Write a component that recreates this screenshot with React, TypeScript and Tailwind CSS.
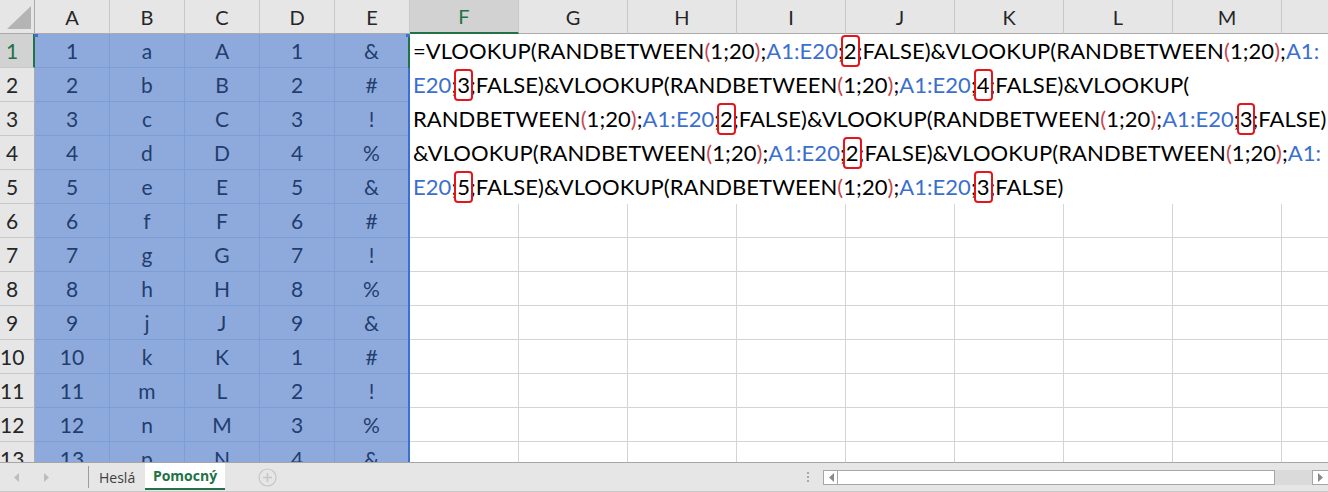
import React from 'react'

const COLS_RIGHT = ['F', 'G', 'H', 'I', 'J', 'K', 'L', 'M']

const DATA: string[][] = [
  ['1', 'a', 'A', '1', '&'],
  ['2', 'b', 'B', '2', '#'],
  ['3', 'c', 'C', '3', '!'],
  ['4', 'd', 'D', '4', '%'],
  ['5', 'e', 'E', '5', '&'],
  ['6', 'f', 'F', '6', '#'],
  ['7', 'g', 'G', '7', '!'],
  ['8', 'h', 'H', '8', '%'],
  ['9', 'j', 'J', '9', '&'],
  ['10', 'k', 'K', '1', '#'],
  ['11', 'm', 'L', '2', '!'],
  ['12', 'n', 'M', '3', '%'],
  ['13', 'p', 'N', '4', '&'],
]

// [n] marks a digit that is circled in red
const LINES = [
  '=VLOOKUP(RANDBETWEEN(1;20);A1:E20;[2];FALSE)&VLOOKUP(RANDBETWEEN(1;20);A1:',
  'E20;[3];FALSE)&VLOOKUP(RANDBETWEEN(1;20);A1:E20;[4];FALSE)&VLOOKUP(',
  'RANDBETWEEN(1;20);A1:E20;[2];FALSE)&VLOOKUP(RANDBETWEEN(1;20);A1:E20;[3];FALSE)',
  '&VLOOKUP(RANDBETWEEN(1;20);A1:E20;[2];FALSE)&VLOOKUP(RANDBETWEEN(1;20);A1:',
  'E20;[5];FALSE)&VLOOKUP(RANDBETWEEN(1;20);A1:E20;[3];FALSE)',
]

function FormulaLine({ text }: { text: string }) {
  const parts = text.split(/(A1:E20|A1:$|^E20|\(1;20\)|\[\d\])/).filter(Boolean)
  return (
    <div className="h-[34px] leading-[34px] whitespace-nowrap">
      {parts.map((p, i) => {
        if (p === 'A1:E20' || p === 'A1:' || p === 'E20')
          return <span key={i} className="text-[#3b6fce]">{p}</span>
        if (p === '(1;20)')
          return (
            <span key={i}>
              <span className="text-[#c8484f]">(</span>1;20<span className="text-[#c8484f]">)</span>
            </span>
          )
        if (p.startsWith('['))
          return (
            <span
              key={i}
              className="inline-block h-[32px] leading-[28px] border-2 border-[#e3161b] rounded-[4px] px-[1px] -mx-[3px] relative"
            >
              {p[1]}
            </span>
          )
        return <span key={i}>{p}</span>
      })}
    </div>
  )
}

function Corner() {
  return (
    <div className="w-[35px] h-[34px] border-r border-b border-[#ababab] bg-[#e6e6e6] shrink-0">
      <svg width="34" height="33" viewBox="0 0 34 33">
        <polygon points="7,29 31,29 31,6" fill="#b4b4b4" />
      </svg>
    </div>
  )
}

function TriLeft({ color = '#bdbdbd' }: { color?: string }) {
  return (
    <svg width="6" height="9" viewBox="0 0 6 9">
      <polygon points="6,0 6,9 1,4.5" fill={color} />
    </svg>
  )
}

function TriRight({ color = '#bdbdbd' }: { color?: string }) {
  return (
    <svg width="6" height="9" viewBox="0 0 6 9">
      <polygon points="0,0 0,9 5,4.5" fill={color} />
    </svg>
  )
}

export default function App() {
  return (
    <div className="w-[1328px] h-[492px] overflow-hidden bg-white flex flex-col font-['Lato',sans-serif] text-[21px] text-black">
      {/* column headers */}
      <div className="flex h-[34px] shrink-0 bg-[#e6e6e6] text-[#262626] text-[20px]">
        <Corner />
        {['A', 'B', 'C', 'D', 'E'].map((c) => (
          <div key={c} className="w-[75px] shrink-0 h-[34px] border-r border-b border-r-[#c9c9c9] border-b-[#ababab] flex items-center justify-center">
            {c}
          </div>
        ))}
        {COLS_RIGHT.map((c) =>
          c === 'F' ? (
            <div key={c} className="w-[109px] shrink-0 h-[34px] bg-[#d2d2d2] border-r border-r-[#c9c9c9] border-b-2 border-b-[#217346] flex items-center justify-center text-[#217346]">
              {c}
            </div>
          ) : (
            <div key={c} className="w-[109px] shrink-0 h-[34px] border-r border-b border-r-[#c9c9c9] border-b-[#ababab] flex items-center justify-center">
              {c}
            </div>
          )
        )}
        <div className="flex-1 h-[34px] border-b border-[#ababab]" />
      </div>

      {/* sheet body */}
      <div className="flex h-[428px] shrink-0 overflow-hidden relative">
        <div className="w-[35px] shrink-0 flex flex-col bg-[#e6e6e6]">
          {DATA.map((_, i) =>
            i === 0 ? (
              <div key={i} className="h-[34px] shrink-0 bg-[#d2d2d2] border-b border-[#c9c9c9] border-r-2 border-r-[#217346] text-[#217346] flex items-center">
                <span className="w-[24px] text-center">{i + 1}</span>
              </div>
            ) : (
              <div key={i} className="h-[34px] shrink-0 border-b border-r border-b-[#c9c9c9] border-r-[#ababab] text-[#262626] flex items-center">
                <span className="w-[24px] text-center">{i + 1}</span>
              </div>
            )
          )}
        </div>

        <div className="w-[375px] shrink-0 bg-[#8eaadc] border-r-2 border-[#3a6fd3] text-[#223d6e]">
          {DATA.map((row, i) => (
            <div key={i} className="grid grid-cols-[75px_75px_75px_75px_73px] h-[34px] border-b border-[#7d9dd6]">
              {row.map((v, j) => (
                <div key={j} className={`flex items-center justify-center ${j < 4 ? 'border-r border-[#7d9dd6]' : ''}`}>
                  {v}
                </div>
              ))}
            </div>
          ))}
        </div>

        <div className="flex-1 flex flex-col">
          <div className="h-[170px] shrink-0 pl-[3px] overflow-hidden bg-white text-[22px] tracking-[0.05px]">
            {LINES.map((l, i) => (
              <FormulaLine key={i} text={l} />
            ))}
          </div>
          {DATA.slice(5).map((_, i) => (
            <div key={i} className="flex h-[34px] shrink-0 border-b border-[#d4d4d4]">
              {COLS_RIGHT.map((c) => (
                <div key={c} className="w-[109px] shrink-0 border-r border-[#d4d4d4]" />
              ))}
              <div className="flex-1" />
            </div>
          ))}
        </div>

        {/* active cell edge and selection handles */}
        <div className="absolute left-[408px] top-0 w-[2px] h-[34px] bg-[#217346]" />
        <div className="absolute left-[34px] -top-[1px] w-[4px] h-[4px] bg-[#3a6fd3]" />
        <div className="absolute left-[406px] -top-[1px] w-[4px] h-[4px] bg-[#3a6fd3]" />
      </div>

      {/* sheet tabs and scrollbar */}
      <div className="h-[30px] shrink-0 bg-[#e6e6e6] border-t border-b border-t-[#a6a6a6] border-b-[#c8c8c8] flex items-stretch text-[14px] font-['Open_Sans',sans-serif]">
        <div className="w-[88px] shrink-0 flex items-center">
          <span className="ml-[13px] flex"><TriLeft /></span>
          <span className="ml-[25px] flex"><TriRight /></span>
        </div>
        <div className="w-px self-center h-[22px] bg-[#9e9e9e]" />
        <div className="w-[56px] shrink-0 pl-[10px] flex items-center text-[#404040]">Heslá</div>
        <div className="w-[80px] shrink-0 bg-white border-b-2 border-[#217346] mb-[1px] flex items-center justify-center font-bold text-[#217346]">
          Pomocný
        </div>
        <div className="ml-[33px] flex items-center">
          <svg width="19" height="19" viewBox="0 0 19 19">
            <circle cx="9.5" cy="9.5" r="8.5" fill="none" stroke="#c6c6c6" strokeWidth="1.2" />
            <path d="M9.5 5v9M5 9.5h9" stroke="#c6c6c6" strokeWidth="1.6" />
          </svg>
        </div>
        <div className="ml-auto flex items-center">
          <div className="flex flex-col gap-[2px] mr-[14px]">
            <span className="w-[2px] h-[2px] bg-[#a8a8a8]" />
            <span className="w-[2px] h-[2px] bg-[#a8a8a8]" />
            <span className="w-[2px] h-[2px] bg-[#a8a8a8]" />
          </div>
          <div className="flex h-[15px] w-[452px] border border-[#a6a6a6] bg-white">
            <div className="w-[14px] border-r border-[#a6a6a6] flex items-center justify-center">
              <TriLeft color="#8a8a8a" />
            </div>
            <div className="flex-1" />
          </div>
          <div className="w-[37px] h-[15px] bg-[#dadada]" />
          <div className="w-[16px] h-[15px] border border-r-0 border-[#a6a6a6] bg-white flex items-center justify-center">
            <TriRight color="#8a8a8a" />
          </div>
        </div>
      </div>
    </div>
  )
}
